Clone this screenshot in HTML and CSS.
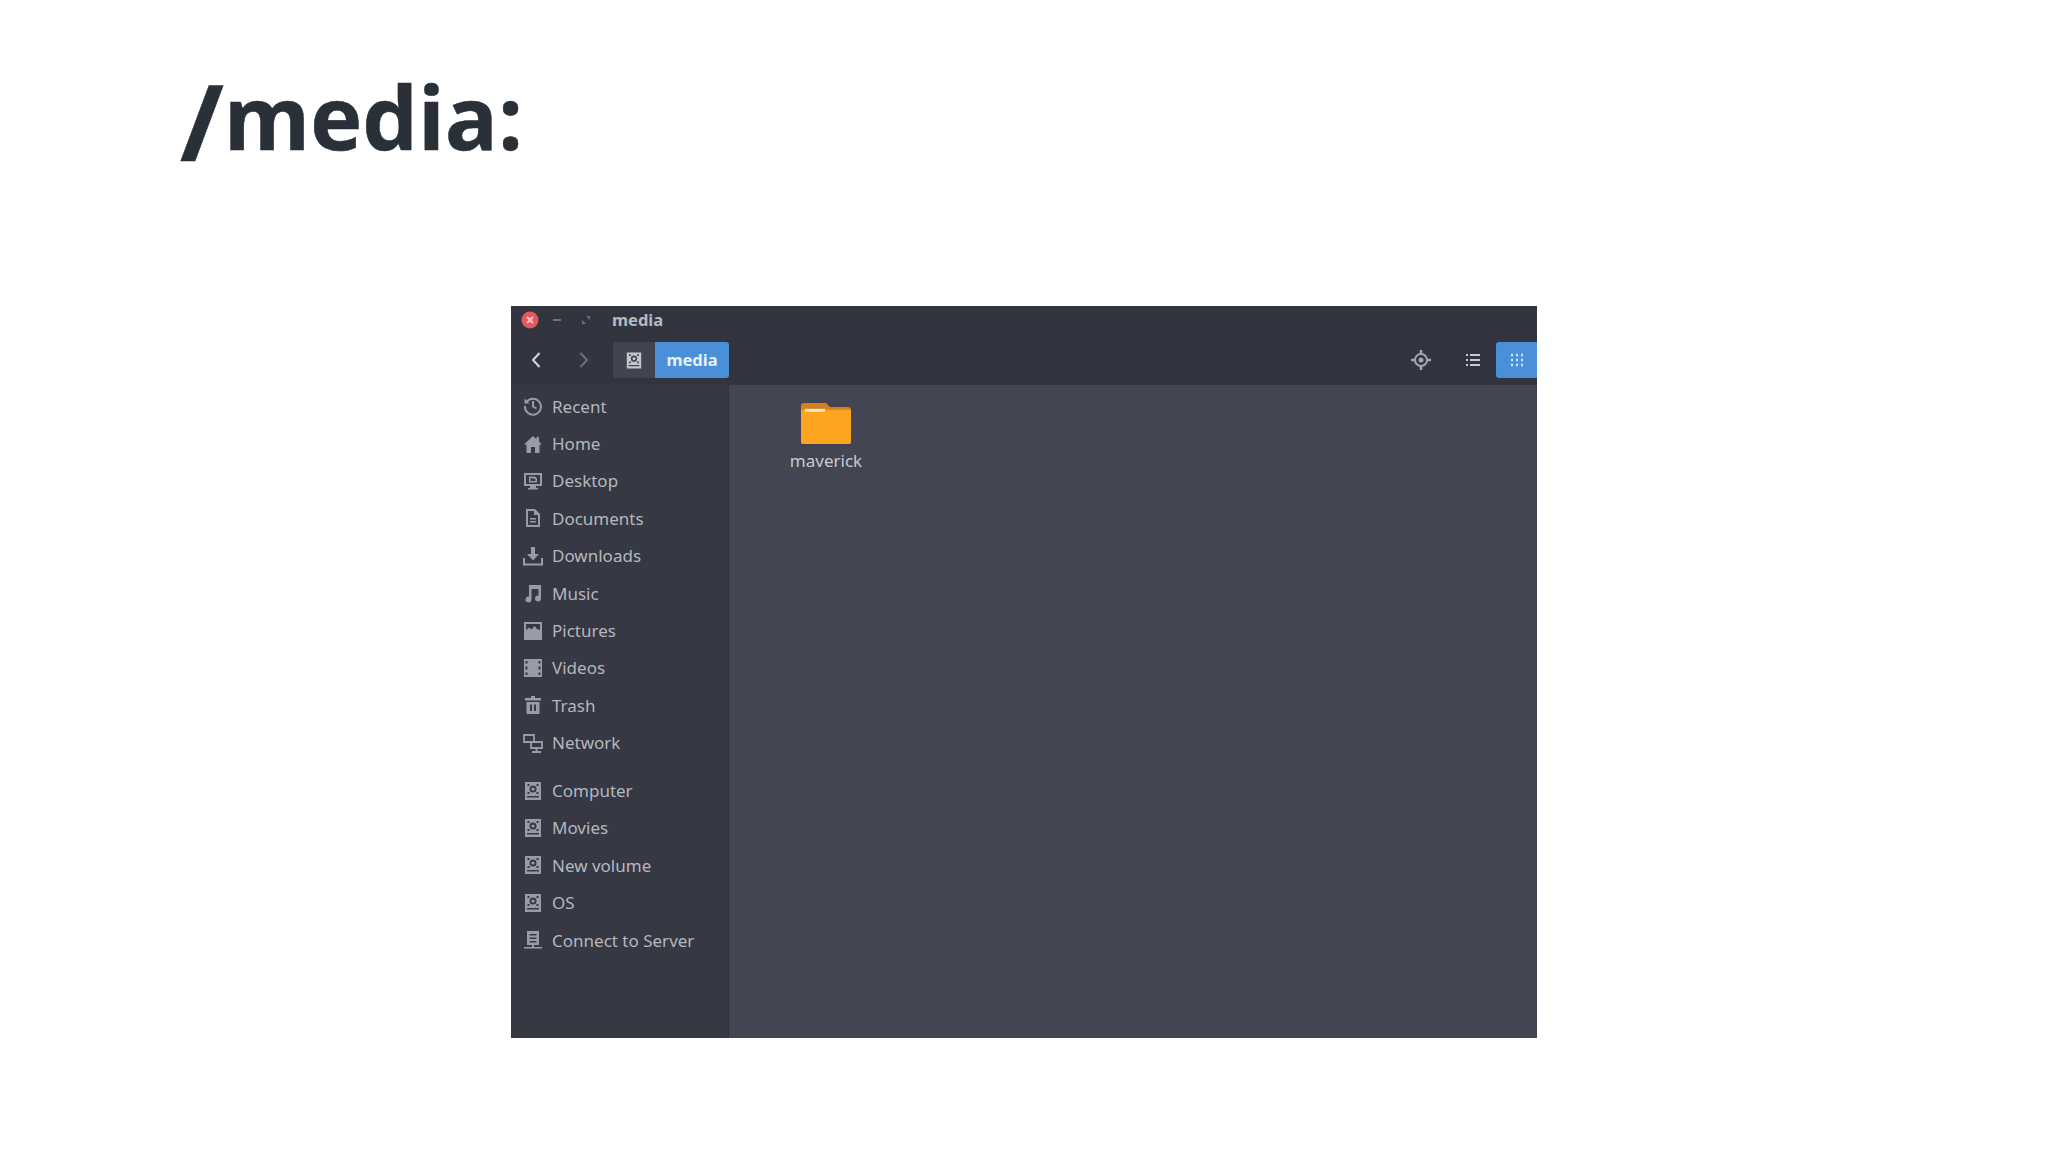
FILE: index.html
```html
<!DOCTYPE html>
<html lang="en">
<head>
	<meta charset="UTF-8">
	<title>/media:</title>
	<link rel="stylesheet" href="styles.css">
</head>
<body>
	<svg class="defs" width="0" height="0">
		<defs>
			<symbol id="i-disk" viewBox="0 0 20 20">
				<path fill="currentColor" fill-rule="evenodd" d="M2 1h16v18H2zM4 15v1.500h12V15zM10 4.500a3.500 3.500 0 1 0 0 7 3.500 3.500 0 0 0 0-7zM4.500 3v2h2V3zM13.500 3v2h2V3zM4.500 11v2h2v-2zM13.500 11v2h2v-2z"/>
				<circle fill="currentColor" cx="10" cy="8" r="1.600"/>
			</symbol>
		</defs>
	</svg>
	<h1 class="title"><span class="slash">/</span>media:</h1>
	<div class="window">
		<div class="topbar">
			<div class="titlebar">
				<span class="btn-close">
					<svg viewBox="0 0 18 18" width="18" height="18"><circle cx="9" cy="9" r="8.500" fill="#e4595f"/><path d="M6 6l6 6M12 6l-6 6" stroke="#f3c4c6" stroke-width="2"/></svg>
				</span>
				<span class="btn-min"></span>
				<svg class="btn-max" viewBox="0 0 10 10" width="10" height="10"><path d="M5 1h4v4zM5 9H1V5z" fill="#6f7280"/></svg>
				<span class="win-name">media</span>
			</div>
			<div class="toolbar">
				<svg class="nav nav-back" viewBox="0 0 12 18" width="12" height="18"><path d="M9.500 2L3 9l6.500 7" fill="none" stroke="#d5d7dd" stroke-width="2"/></svg>
				<svg class="nav nav-fwd" viewBox="0 0 12 18" width="12" height="18"><path d="M2.500 2L9 9l-6.500 7" fill="none" stroke="#6e717d" stroke-width="2"/></svg>
				<div class="crumbs">
					<span class="crumb-root"><svg class="ico-disk" width="18" height="19"><use href="#i-disk"/></svg></span>
					<span class="crumb-active">media</span>
				</div>
				<div class="tools">
					<svg class="tool-loc" viewBox="0 0 20 20" width="20" height="20">
						<circle cx="10" cy="10" r="6" fill="none" stroke="#a3a6b0" stroke-width="2"/>
						<circle cx="10" cy="10" r="2.500" fill="#a3a6b0"/>
						<path d="M10 0v4M10 16v4M0 10h4M16 10h4" stroke="#a3a6b0" stroke-width="2.500"/>
					</svg>
					<svg class="tool-list" viewBox="0 0 14 14" width="14" height="14">
						<path d="M0 2h2M4 2h10M0 7h2M4 7h10M0 12h2M4 12h10" stroke="#c8cad1" stroke-width="2"/>
					</svg>
					<span class="tool-grid">
						<svg viewBox="0 0 14 14" width="14" height="14">
							<path d="M1 2h2M6 2h2M11 2h2M1 7h2M6 7h2M11 7h2M1 12h2M6 12h2M11 12h2" stroke="#d3e6fa" stroke-width="2.500"/>
						</svg>
					</span>
				</div>
			</div>
		</div>
		<div class="panes">
			<ul class="sidebar">
				<li><svg viewBox="0 0 20 20"><path d="M3.500 6A8 8 0 1 1 2 10" fill="none" stroke="currentColor" stroke-width="2"/><path d="M1.500 2.500v5h5z" fill="currentColor"/><path d="M10 5v5.500l3.500 2" fill="none" stroke="currentColor" stroke-width="2"/></svg>Recent</li>
				<li><svg viewBox="0 0 20 20"><path d="M10 2L1 10.500h2.500V19h4.500v-6h4v6h4.500v-8.500H19l-3-3V3h-2.500v2.200z" fill="currentColor"/></svg>Home</li>
				<li><svg viewBox="0 0 20 20"><path fill="currentColor" fill-rule="evenodd" d="M1 2h18v13h-6v2h2v1.500H5V17h2v-2H1zM3 4v9h14V4zM6 5.500h6l2 2v4H6zM7.500 7v3h5V8z"/></svg>Desktop</li>
				<li><svg viewBox="0 0 20 20"><path fill="currentColor" fill-rule="evenodd" d="M3 1h9l5 5v13H3zM5 3v14h10V7h-4V3zM7 10h6v1.500H7zM7 13h6v1.500H7z"/></svg>Documents</li>
				<li><svg viewBox="0 0 20 20"><path fill="currentColor" d="M8 1h4v7h4l-6 6.500L4 8h4zM0 12h2v5.500h16V12h2v7.500H0z"/></svg>Downloads</li>
				<li><svg viewBox="0 0 20 20"><path fill="currentColor" d="M6 2h12v13.500a3 3 0 1 1-2.500-3V6h-7v10.500a3 3 0 1 1-2.500-3z"/></svg>Music</li>
				<li><svg viewBox="0 0 20 20"><path fill="currentColor" fill-rule="evenodd" d="M1 1h18v18H1zM3 3v6l3-2.500 2.500 2 3-3.500 2.500 3 3 1V3z"/></svg>Pictures</li>
				<li><svg viewBox="0 0 20 20"><path fill="currentColor" fill-rule="evenodd" d="M1 1h18v18H1zM2.500 3v2.500h2V3zM2.500 8.500v3h2v-3zM2.500 14.500V17h2v-2.500zM15.500 3v2.500h2V3zM15.500 8.500v3h2v-3zM15.500 14.500V17h2v-2.500z"/></svg>Videos</li>
				<li><svg viewBox="0 0 20 20"><path fill="currentColor" fill-rule="evenodd" d="M8 1h4v2h6v2.500H2V3h6zM3.500 7h13v12h-13zM7 9.500V16h2V9.500zM11 9.500V16h2V9.500z"/></svg>Trash</li>
				<li class="last-place"><svg viewBox="0 0 20 20"><path fill="none" stroke="currentColor" stroke-width="1.800" d="M1 2h10v7H1zM8 9h11v6H8zM13.500 15v4M9 19h9"/></svg>Network</li>
				<li><svg><use href="#i-disk"/></svg>Computer</li>
				<li><svg><use href="#i-disk"/></svg>Movies</li>
				<li><svg><use href="#i-disk"/></svg>New volume</li>
				<li><svg><use href="#i-disk"/></svg>OS</li>
				<li><svg viewBox="0 0 20 20"><path fill="currentColor" fill-rule="evenodd" d="M4 1h12v14h-5v2h8v1.500H1V17h8v-2H4zM6.500 4v1.500h7V4zM6.500 7.500V9h7V7.500zM6.500 11v1.500h7V11z"/></svg>Connect to Server</li>
			</ul>
			<div class="files">
				<div class="file">
					<svg class="folder" viewBox="0 0 50 42" width="50" height="41" preserveAspectRatio="none">
						<path d="M0 3a3 3 0 0 1 3-3h22l4 4h18a3 3 0 0 1 3 3v6H0z" fill="#d67f1f"/>
						<path d="M0 7h50v33a2 2 0 0 1-2 2H2a2 2 0 0 1-2-2z" fill="#fda521"/>
						<rect x="4" y="6" width="20" height="3" fill="#fbeac8"/>
					</svg>
					<span>maverick</span>
				</div>
			</div>
		</div>
	</div>
</body>
</html>
```

FILE: styles.css
```css
body {
	margin: 0;
	background: #fff;
	font-family: "Open Sans", sans-serif;
}

.defs {
	position: absolute;
}

.title {
	margin: 0;
	padding: 54px 0 0 180px;
	height: 250px;
	box-sizing: border-box;
	font-size: 88px;
	line-height: 124px;
	font-weight: 700;
	color: #2a3037;
	-webkit-text-stroke: 0.500px #2a3037;
}

.slash {
	font-size: 106px;
	line-height: 0;
	vertical-align: -11px;
}

.window {
	width: 1026px;
	height: 732px;
	margin: 56px auto 0;
	display: flex;
	flex-direction: column;
	font-family: "Noto Sans", sans-serif;
	background: #434552;
}

.topbar {
	height: 79px;
	background: #32353f;
	flex-shrink: 0;
}

.titlebar {
	height: 27px;
	display: flex;
	align-items: center;
	padding-left: 10px;
	color: #b7b9c0;
}

.btn-close {
	display: flex;
	width: 18px;
}

.btn-min {
	width: 8px;
	height: 2px;
	margin-left: 14px;
	background: #6f7280;
}

.btn-max {
	margin-left: 20px;
}

.win-name {
	margin-left: 21px;
	font-size: 16.500px;
	font-weight: 700;
}

.toolbar {
	height: 36px;
	margin-top: 9px;
	display: flex;
	align-items: center;
}

.nav-back {
	margin-left: 19px;
}

.nav-fwd {
	margin-left: 36px;
}

.crumbs {
	display: flex;
	height: 36px;
	margin-left: 23px;
	border-radius: 3px;
	overflow: hidden;
}

.crumb-root {
	width: 42px;
	display: flex;
	align-items: center;
	justify-content: center;
	background: #42454f;
	color: #c4c6cc;
}

.crumb-active {
	width: 74px;
	background: #4a90d9;
	color: #e6f1fb;
	font-size: 16.500px;
	font-weight: 700;
	line-height: 35px;
	text-align: center;
}

.tools {
	margin-left: auto;
	display: flex;
	align-items: center;
}

.tool-list {
	margin-left: 35px;
}

.tool-grid {
	width: 41px;
	height: 36px;
	margin-left: 16px;
	display: flex;
	align-items: center;
	justify-content: center;
	background: #4a90d9;
	border-radius: 3px 0 0 3px;
}

.panes {
	flex: 1;
	display: flex;
	min-height: 0;
}

.sidebar {
	width: 217px;
	margin: 0;
	padding: 2.500px 0 0;
	list-style: none;
	background: #363844;
	border-right: 1px solid #2f313b;
	color: #b5b7be;
	font-size: 17px;
}

.sidebar li {
	height: 37.400px;
	display: flex;
	align-items: center;
	padding-left: 12px;
}

.sidebar svg {
	width: 20px;
	height: 20px;
	margin-right: 9px;
	color: #9a9ca5;
	flex-shrink: 0;
}

.sidebar .last-place {
	margin-bottom: 10.500px;
}

.files {
	flex: 1;
	padding: 18px 0 0 60px;
}

.file {
	width: 74px;
	display: flex;
	flex-direction: column;
	align-items: center;
	gap: 5px;
	color: #c8cad0;
	font-size: 17px;
}
```
